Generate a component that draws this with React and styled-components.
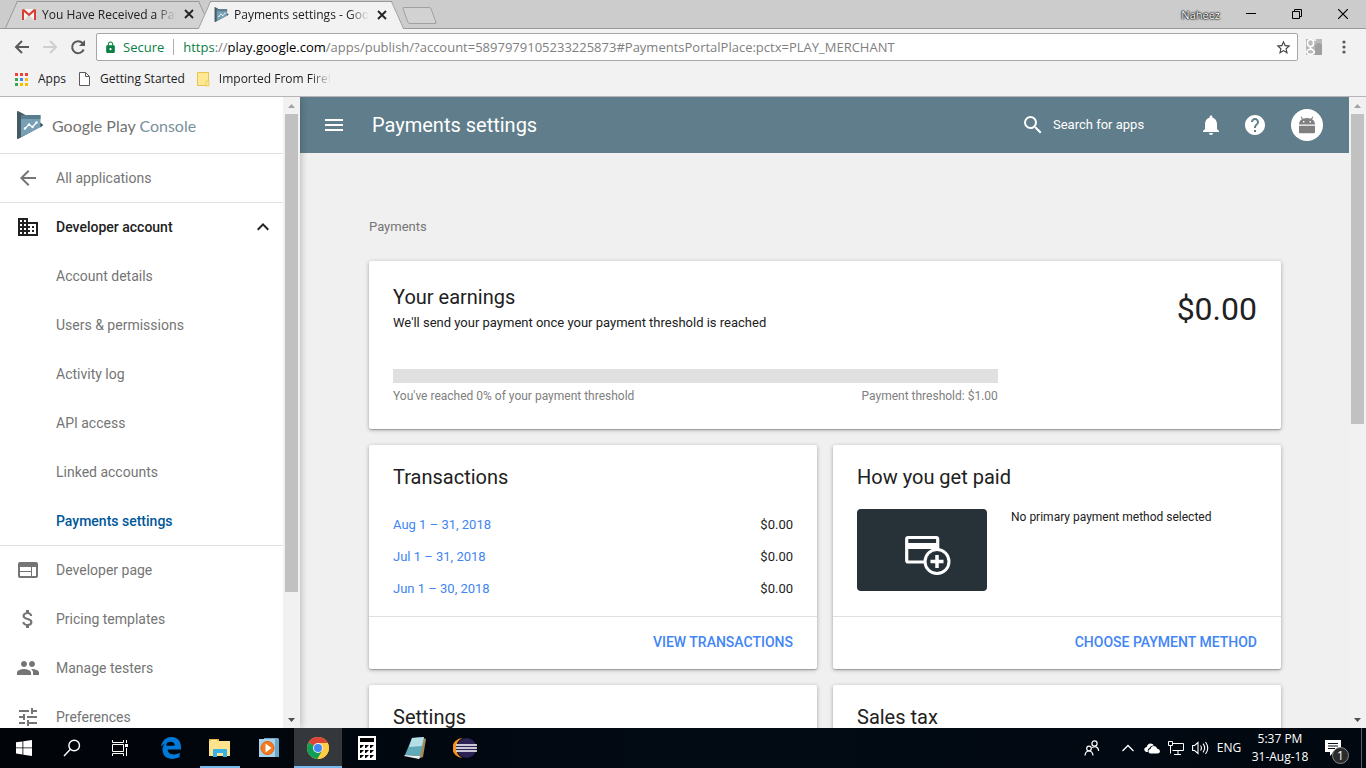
import React from 'react'
import styled, { createGlobalStyle } from 'styled-components'
import {
  MdArrowBack,
  MdAttachMoney,
  MdDomain,
  MdHelp,
  MdKeyboardArrowUp,
  MdLock,
  MdMenu,
  MdNotifications,
  MdPeople,
  MdSearch,
  MdStarBorder,
  MdTune,
  MdWeb,
} from 'react-icons/md'

const GlobalStyle = createGlobalStyle`
  * {
    box-sizing: border-box;
  }

  body {
    margin: 0;
    overflow: hidden;
    font-family: Roboto, 'Liberation Sans', sans-serif;
    color: #212121;
  }

  button {
    padding: 0;
    border: 0;
    background: none;
    font: inherit;
    color: inherit;
    cursor: pointer;
  }

  a {
    color: inherit;
    text-decoration: none;
  }

  h1, h2, p, ul {
    margin: 0;
    padding: 0;
    font-weight: 400;
  }

  ul {
    list-style: none;
  }

  svg {
    display: block;
    flex: none;
  }
`

const Screen = styled.div`
  display: flex;
  flex-direction: column;
  height: 100vh;
  overflow: hidden;
`

/* ---------- browser ---------- */

const Browser = styled.header`
  flex: none;
  background: #f2f2f2;
  border-bottom: 1px solid #b6b4b6;
  font-family: 'Open Sans', 'Noto Sans', sans-serif;
  font-size: 12px;
`

const TitleBar = styled.div`
  display: flex;
  height: 29px;
  padding-left: 5px;
  background: #cccccc;
  border-bottom: 1px solid #999999;
`

const Tab = styled.div`
  position: relative;
  z-index: ${(p) => (p.$active ? 2 : 1)};
  display: flex;
  align-items: center;
  width: 206px;
  height: ${(p) => (p.$active ? 29 : 28)}px;
  margin-right: -13px;
  padding: 0 17px 0 16px;

  &::before,
  &::after {
    content: '';
    position: absolute;
    z-index: -1;
    top: 1px;
    bottom: 0;
    width: 50%;
    background: ${(p) => (p.$active ? '#f2f2f2' : '#d2d2d2')};
    border-top: 1px solid #999999;
  }

  &::before {
    left: 6px;
    border-left: 1px solid #999999;
    transform: skewX(-24deg);
  }

  &::after {
    right: 6px;
    border-right: 1px solid #999999;
    transform: skewX(24deg);
  }
`

const FadingText = styled.span`
  flex: 1;
  min-width: 0;
  overflow: hidden;
  white-space: nowrap;
  mask-image: linear-gradient(to left, transparent, #000 20px);
`

const TabLabel = styled(FadingText)`
  margin: 0 8px 0 5px;
`

const TabClose = styled.button`
  width: 10px;
  height: 10px;
`

const NewTab = styled.button`
  align-self: center;
  width: 29px;
  height: 17px;
  margin: 2px 0 0 14px;
  background: #d2d2d2;
  border: 1px solid #a0a0a0;
  border-radius: 2px;
  transform: skewX(20deg);
`

const UserName = styled.span`
  margin-left: auto;
  margin-right: 8px;
  align-self: center;
  font-size: 11px;
  color: #ffffff;
  text-shadow: 0 0 1px #000, 0 0 2px #000, 0 0 2px #000;
`

const WindowButton = styled.button`
  display: grid;
  place-items: center;
  width: 46px;
  height: 27px;
`

const Toolbar = styled.div`
  display: flex;
  align-items: center;
  height: 36px;
  padding: 0 8px 0 14px;
`

const ToolButton = styled.button`
  display: grid;
  place-items: center;
  width: 28px;
  height: 28px;
  margin-left: ${(p) => p.$gap || 0}px;
  color: ${(p) => (p.$off ? '#cfcfcf' : '#5a5a5a')};
  flex: none;
`

const NavButton = styled(ToolButton)`
  width: 16px;
  margin-right: 12px;
`

const Omnibox = styled.div`
  display: flex;
  flex: 1;
  align-items: center;
  min-width: 0;
  height: 28px;
  margin-left: -2px;
  padding: 0 5px 0 7px;
  background: #ffffff;
  border: 1px solid #a6a6a6;
  border-radius: 2px;
  font-size: 13px;
  color: #808080;
  white-space: nowrap;
`

const Secure = styled.span`
  margin: 0 9px 0 6px;
  color: #0b8043;
`

const Address = styled.span`
  flex: 1;
  min-width: 0;
  overflow: hidden;
  padding-left: 9px;
  border-left: 1px solid #b0b0b0;
  line-height: 16px;

  b {
    font-weight: 400;
    color: #0b8043;
  }

  em {
    font-style: normal;
    color: #000000;
  }
`

const Bookmarks = styled.nav`
  display: flex;
  align-items: center;
  height: 31px;
  padding: 0 14px 4px;
`

const Bookmark = styled.a`
  display: flex;
  align-items: center;
  gap: 8px;
  margin-right: 10px;
  white-space: nowrap;

  ${FadingText} {
    flex: none;
    width: ${(p) => (p.$clip ? '112px' : 'auto')};
    ${(p) => (p.$clip ? '' : 'mask-image: none;')}
  }
`

/* ---------- page ---------- */

const Viewport = styled.div`
  display: flex;
  flex: 1;
  min-height: 0;
`

const Sidebar = styled.aside`
  z-index: 1;
  display: flex;
  flex: none;
  width: 300px;
  background: #ffffff;
  box-shadow: 0 0 8px rgba(0, 0, 0, 0.3);
  clip-path: inset(0 -8px 0 0);
`

const SideContent = styled.div`
  flex: 1;
  min-width: 0;
  overflow: hidden;
`

const Brand = styled.a`
  display: flex;
  align-items: center;
  gap: 8px;
  height: 57px;
  padding-left: 16px;
  border-bottom: 1px solid #e0e0e0;
  font-family: Lato, sans-serif;
  font-size: 16px;
  color: #737373;

  span {
    color: #78909c;
  }
`

const SideItem = styled.a`
  display: flex;
  align-items: center;
  gap: 16px;
  height: 49px;
  padding: 0 8px 0 16px;
  font-size: 14px;
  color: #757575;

  svg {
    width: 24px;
    height: 24px;
  }
`

const ItemText = styled.span`
  flex: 1;
`

const TopItem = styled(SideItem)`
  border-bottom: 1px solid #e0e0e0;
`

const GroupButton = styled(SideItem)`
  width: 100%;
  height: 48px;
  padding-bottom: 1px;
  text-align: left;
  font-weight: 500;
  color: #212121;
`

const SubItem = styled(SideItem)`
  padding-left: 56px;
  font-weight: ${(p) => (p.$current ? 500 : 400)};
  color: ${(p) => (p.$current ? '#01579b' : '#757575')};
`

const SubList = styled.ul`
  margin-bottom: -1px;
  border-bottom: 1px solid #e0e0e0;
`

const Track = styled.div`
  display: flex;
  flex: none;
  flex-direction: column;
  width: 17px;
  background: #f1f1f1;
`

const TrackButton = styled.button`
  display: grid;
  place-items: center;
  height: 17px;
  color: ${(p) => (p.$off ? '#a3a3a3' : '#505050')};
`

const Rail = styled.div`
  flex: 1;
`

const Thumb = styled.div`
  margin: 0 2px;
  background: #c1c1c1;
`

const Main = styled.main`
  flex: 1;
  min-width: 0;
  overflow: hidden;
  background: #f0f0f0;
`

const AppBar = styled.div`
  display: flex;
  align-items: center;
  height: 56px;
  padding: 0 26px 0 22px;
  background: #607d8b;
  color: #ffffff;
`

const BarTitle = styled.h1`
  flex: 1;
  margin-left: 26px;
  font-size: 20px;
  line-height: 24px;
`

const SearchBox = styled.label`
  display: flex;
  align-items: center;
  gap: 8px;
  width: 178px;

  input {
    flex: 1;
    min-width: 0;
    padding: 0 0 2px;
    border: 0;
    outline: 0;
    background: none;
    font: 13px Roboto, sans-serif;
    color: #ffffff;
  }

  input::placeholder {
    color: #ffffff;
    opacity: 1;
  }
`

const BarButton = styled.button`
  width: 24px;
  height: 24px;
  margin-right: 20px;
`

const Avatar = styled.button`
  display: grid;
  place-items: center;
  width: 32px;
  height: 32px;
  margin-left: 4px;
  background: #ffffff;
  border-radius: 50%;
`

const Content = styled.div`
  padding: 65px 68px 0 69px;
`

const Crumb = styled.p`
  margin-bottom: 26px;
  font-size: 13px;
  line-height: 17px;
  color: #757575;
`

const Cards = styled.div`
  display: grid;
  grid-template-columns: 1fr 1fr;
  gap: 16px;
`

const Card = styled.section`
  grid-column: ${(p) => (p.$wide ? '1 / -1' : 'auto')};
  display: flex;
  flex-direction: column;
  background: #ffffff;
  border-radius: 2px;
  box-shadow: 0 1px 4px rgba(0, 0, 0, 0.3), 0 1px 1px rgba(0, 0, 0, 0.2);
`

const CardBody = styled.div`
  flex: 1;
  padding: 20px 24px 11px;
`

const CardTitle = styled.h2`
  margin-bottom: ${(p) => (p.$tight ? 6 : 20)}px;
  font-size: 20px;
  line-height: 24px;
`

const Earnings = styled.div`
  display: grid;
  grid-template-columns: 7fr 3fr;
  padding: 24px 24px 25px;
`

const Amount = styled.div`
  text-align: right;
  font-size: 32px;
  line-height: 48px;
`

const Lead = styled.p`
  font-size: 13px;
  line-height: 16px;
`

const Progress = styled.div`
  height: 14px;
  margin: 38px 0 5px;
  background: #e0e0e0;
`

const ProgressFill = styled.div`
  height: 100%;
  background: #4285f4;
`

const ProgressNotes = styled.div`
  display: flex;
  justify-content: space-between;
  font-size: 12px;
  line-height: 16px;
  color: #808080;
`

const TransactionTable = styled.table`
  width: 100%;
  border-collapse: collapse;
  font-size: 13px;

  th,
  td {
    height: 32px;
    padding: 0 0 2px;
    font-weight: 400;
    text-align: left;
  }

  td {
    text-align: right;
  }

  a {
    color: #4285f4;
  }
`

const CardFooter = styled.div`
  display: flex;
  justify-content: flex-end;
  height: 53px;
  padding: 0 24px 2px;
  border-top: 1px solid #e0e0e0;

  button {
    font-size: 14px;
    font-weight: 500;
    text-transform: uppercase;
    color: #4285f4;
  }
`

const Method = styled.div`
  display: flex;
  gap: 24px;
  font-size: 12px;
  line-height: 16px;
`

const MethodArt = styled.div`
  display: grid;
  place-items: center;
  width: 130px;
  height: 82px;
  padding: 10px 0 0 12px;
  background: #263238;
  border-radius: 4px;
`

/* ---------- taskbar ---------- */

const Taskbar = styled.footer`
  display: flex;
  flex: none;
  height: 40px;
  background: linear-gradient(to right, #010409, #020a14 50%, #010810);
  color: #ffffff;
  font-family: 'Open Sans', 'Noto Sans', sans-serif;
  font-size: 12px;
`

const TaskGroup = styled.div`
  display: flex;
  gap: ${(p) => p.$gap || 0}px;
  margin-right: 3px;
`

const TaskButton = styled.button`
  display: grid;
  place-items: center;
  width: 48px;
  height: 40px;
  background: ${(p) => (p.$active ? '#34383c' : 'none')};
  ${(p) => p.$open && 'background: linear-gradient(#76b9ed, #76b9ed) 4px 38px / 40px 2px no-repeat;'}
  ${(p) => p.$active && 'box-shadow: inset 0 -2px #76b9ed;'}
`

const Tray = styled.div`
  display: flex;
  align-items: center;
  margin-left: auto;
`

const TrayButton = styled.button`
  display: grid;
  place-items: center;
  width: ${(p) => p.$width || 24}px;
  height: 40px;
  margin-right: ${(p) => p.$gap || 0}px;
  line-height: 18px;
`

const Notice = styled(TrayButton)`
  position: relative;
`

const Badge = styled.span`
  position: absolute;
  left: 18px;
  top: 19px;
  width: 17px;
  height: 17px;
  border: 1px solid #8a8a8a;
  border-radius: 50%;
  background: #2b2b2b;
  font-size: 12px;
  line-height: 15px;
`

const ShowDesktop = styled.button`
  width: 5px;
  height: 40px;
  border-left: 1px solid #5a5f66;
`

/* ---------- icons ---------- */

const GmailIcon = () => (
  <svg width="16" height="16" viewBox="0 0 16 16">
    <path d="M1 3h14v11H1z" fill="#f4f4f4" />
    <path d="M3 14 8 9l5 5z" fill="#d8d8d8" />
    <path d="M1 14V3.500L3 3l5 4.500L13 3l2 .5V14h-2V6L8 10.200 3 6v8z" fill="#d93f34" />
  </svg>
)

const ConsoleIcon = ({ size }) => (
  <svg width={size} height={size} viewBox="0 0 28 28">
    <path d="M1 1q0-1.500 1.500-.7L26 13q1.500 1 0 2L2.500 27.800Q1 28.500 1 27z" fill="#455a64" />
    <path d="M24 11.500 26 13q1.500 1 0 2l-2 1.500z" fill="#37474f" />
    <path d="M5 4h19.500v12L5 26z" fill="#78a0b4" />
    <path d="M5 4h19.500v4H5z" fill="#5a7d8e" />
    <path d="m9 17.500 4-4 3.500 2.500 4-4.500" fill="none" stroke="#fff" strokeWidth="1.300" />
    <g fill="#fff">
      <circle cx="9" cy="17.500" r="1.200" />
      <circle cx="13" cy="13.500" r="1.200" />
      <circle cx="16.500" cy="16" r="1.200" />
      <circle cx="20.500" cy="11.500" r="1.200" />
    </g>
  </svg>
)

const CloseIcon = () => (
  <svg width="10" height="10" viewBox="0 0 10 10" stroke="#222" strokeWidth="1.800">
    <path d="m1 1 8 8M9 1 1 9" />
  </svg>
)

const Arrow = ({ flip }) => (
  <svg width="16" height="16" viewBox="0 0 16 16" fill="none" stroke="currentColor" strokeWidth="2">
    <path d={flip ? 'M1 8h13M8 2l6 6-6 6' : 'M15 8H2M8 2 2 8l6 6'} />
  </svg>
)

const ReloadIcon = () => (
  <svg width="16" height="16" viewBox="0 0 16 16" fill="none" stroke="currentColor" strokeWidth="2">
    <path d="M13.700 10.500A6 6 0 1 1 12.500 4L14 5.500" />
    <path d="M15 1v6H9z" fill="currentColor" stroke="none" />
  </svg>
)

const ExtensionIcon = () => (
  <svg width="16" height="16" viewBox="0 0 16 16">
    <path d="M0 0h16v16H0z" fill="#b9b9b9" />
    <path d="M9 6q4-4 7 0v10H9z" fill="#a0a0a0" />
    <g fill="none" stroke="#fff" strokeWidth="1.600">
      <ellipse cx="4.500" cy="4" rx="3" ry="3.500" />
      <path d="M7 1h3M5 7.500q-2 1.500 1 3 3 1.500 2 3.500-2 2-6 1-2-2 0-4l3-1" />
    </g>
  </svg>
)

const DotsIcon = () => (
  <svg width="4" height="16" viewBox="0 0 4 16" fill="#5a5a5a">
    <circle cx="2" cy="3" r="1.600" />
    <circle cx="2" cy="8" r="1.600" />
    <circle cx="2" cy="13" r="1.600" />
  </svg>
)

const appColors = ['#ea4335', '#ea4335', '#ea4335', '#34a853', '#4285f4', '#fbbc05', '#34a853', '#fbbc05', '#fbbc05']

const AppsIcon = () => (
  <svg width="16" height="16" viewBox="0 0 16 16">
    {appColors.map((fill, i) => (
      <rect key={i} x={1 + (i % 3) * 5} y={2 + Math.floor(i / 3) * 5} width="3" height="3" fill={fill} />
    ))}
  </svg>
)

const PageIcon = () => (
  <svg width="16" height="16" viewBox="0 0 16 16" fill="#fff" stroke="#5a5a5a">
    <path d="M3.500 1.500h6l4 4v9h-10z" />
    <path d="M9.500 1.500v4h4" fill="none" />
  </svg>
)

const FolderIcon = () => (
  <svg width="16" height="16" viewBox="0 0 16 16">
    <path d="M2.500 1.500h11v13h-11z" fill="#ffe793" stroke="#eac34f" />
    <path d="M11 10h3v5h-3z" fill="#ffe793" stroke="#eac34f" strokeWidth=".7" />
  </svg>
)

const Triangle = ({ down }) => (
  <svg width="7" height="4" viewBox="0 0 7 4" fill="currentColor">
    <path d={down ? 'M0 0h7L3.500 4z' : 'M0 4h7L3.500 0z'} />
  </svg>
)

const AndroidIcon = () => (
  <svg width="16" height="18" viewBox="0 0 16 18" fill="#808080">
    <path
      fillRule="evenodd"
      d="M0 8.500q.2-3.800 3-5.200L1.600.9l.8-.5 1.700 2.300q3.900-1.400 7.800 0L13.600.4l.8.5L13 3.300q2.800 1.400 3 5.200zM4 5v1.400h1.400V5zm6.600 0v1.400H12V5z"
    />
    <path d="M0 9.700h16v6.500q0 1-1 1H1q-1 0-1-1z" />
  </svg>
)

const CardPlusIcon = () => (
  <svg width="46" height="40" viewBox="0 0 46 40" fill="none" stroke="#fff">
    <rect x="1.700" y="2.500" width="31" height="24.500" rx="1.500" strokeWidth="3.200" />
    <path d="M2 11h31" strokeWidth="6" />
    <circle cx="32" cy="26.500" r="12" fill="#263238" strokeWidth="3" />
    <path d="M32 20v13M25.500 26.500h13" strokeWidth="3.500" />
  </svg>
)

const StartIcon = () => (
  <svg width="16" height="16" viewBox="0 0 16 16" fill="#fff">
    <path d="M0 2.300 6.500 1.400v6.100H0zM7.300 1.300 16 0v7.500H7.300zM0 8.300h6.500v6.200L0 13.600zM7.300 8.300H16V16l-8.700-1.300z" />
  </svg>
)

const TaskSearchIcon = () => (
  <svg width="18" height="18" viewBox="0 0 18 18" fill="none" stroke="#fff" strokeWidth="1.400">
    <circle cx="11.200" cy="6.500" r="5.300" />
    <path d="M7.400 10.300 1 17" />
  </svg>
)

const TaskViewIcon = () => (
  <svg width="17" height="16" viewBox="0 0 17 16" fill="none" stroke="#fff">
    <path d="M.5 0v2.500h11V0M.5 16v-2.500h11V16M.5 4.500h11v7H.5zM14.500 0v3M14.500 8v8" />
    <path d="M13 4h3v3h-3z" fill="#fff" stroke="none" />
  </svg>
)

const EdgeIcon = () => (
  <svg width="20" height="22" viewBox="0 0 20 22">
    <path
      fill="#0078d7"
      d="M0 9.700C.8 4.300 4.600 0 10.300 0 17 0 20 4.800 20 10v2.600H6.700c.2 5.600 7.300 6 12 3.200v4.300c-7 3.700-17.200 2-17.200-7.300 0-4 2.300-6.900 5.500-8.400-1 1.300-1.500 2.600-1.700 4.300h8.400c.3-6-8.200-4.700-13.700 1z"
    />
  </svg>
)

const ExplorerIcon = () => (
  <svg width="22" height="18" viewBox="0 0 22 18">
    <path d="M0 0h10v3H0z" fill="#e8b83a" />
    <path d="M2 1h6v1H2z" fill="#fff3b0" />
    <path d="M0 2h21v15H0z" fill="#fce38c" />
    <path d="M4 18v-7q0-1 1-1h12q1 0 1 1v7h-4v-4H8v4z" fill="#37b1e8" />
  </svg>
)

const MediaIcon = () => (
  <svg width="20" height="20" viewBox="0 0 20 20">
    <path d="M5 0h14l1 1v18H5z" fill="#6ba7c9" />
    <path d="M0 1h16v18H0z" fill="#a8d3ea" />
    <circle cx="8.500" cy="10" r="6.500" fill="#f47b20" stroke="#e5600a" />
    <path d="M6.500 5.500v9l6-4.500z" fill="#fff" />
  </svg>
)

const ChromeIcon = () => (
  <svg width="22" height="22" viewBox="0 0 22 22">
    <circle cx="11" cy="11" r="11" fill="#ffcd40" />
    <path d="M11 11 1.500 5.500a11 11 0 0 1 19 0z" fill="#db4437" />
    <path d="M1.500 5.500a11 11 0 0 0 9 16.500l5-8.500L11 11z" fill="#0f9d58" />
    <path d="M11 6h9.800a11 11 0 0 1-10.300 16l4.800-8.500z" fill="#ffcd40" />
    <circle cx="11" cy="11" r="5" fill="#f1f1f1" />
    <circle cx="11" cy="11" r="4" fill="#4285f4" />
  </svg>
)

const CalculatorIcon = () => (
  <svg width="18" height="24" viewBox="0 0 18 24">
    <path d="M0 0h18v24H0z" fill="#fff" />
    <path d="M2 2h14v4H2zM2 9h4L3 12H2zM7 9h4l-3 3H7zM12 9h4l-3 3h-1zM2 14h4l-3 3H2zM7 14h4l-3 3H7zM12 14h4l-3 3h-1zM2 19h4l-3 3H2zM7 19h4l-3 3H7zM12 19h4l-3 3h-1z" />
  </svg>
)

const NotepadIcon = () => (
  <svg width="24" height="22" viewBox="0 0 24 22">
    <path d="m19 1 3 1-3 18-5 2z" fill="#a58a5b" />
    <path d="M8 1 20 0l-4 19-15-1z" fill="#5fa9b8" />
    <path d="M8 1 20 0l-2 9-13 1z" fill="#b5dfe5" />
    <path d="m1 18 15 1-1 3L0 19z" fill="#e8f3f4" />
  </svg>
)

const EclipseIcon = () => (
  <svg width="24" height="20" viewBox="0 0 24 20">
    <path d="M9.500 0A10 10 0 0 0 9.500 20 11 11 0 0 1 9.500 0z" fill="#f7941e" />
    <circle cx="13.500" cy="10" r="10" fill="#2c2255" />
    <path d="M3 7h21M3 10h21M3 13h21" stroke="#fff" strokeWidth="1.500" />
  </svg>
)

const ContactsIcon = () => (
  <svg width="16" height="16" viewBox="0 0 16 16" fill="none" stroke="#fff" strokeWidth="1.200">
    <circle cx="10.500" cy="3.500" r="2.600" />
    <circle cx="5" cy="8.500" r="2.300" />
    <path d="M1 15.500q.5-4.500 4-4.500t4 4.500M8 7.500q6-2.500 6.700 3.500" />
  </svg>
)

const ChevronIcon = () => (
  <svg width="12" height="8" viewBox="0 0 12 8" fill="none" stroke="#fff" strokeWidth="1.300">
    <path d="m.5 7 5.500-5.500L11.500 7" />
  </svg>
)

const CloudIcon = () => (
  <svg width="16" height="11" viewBox="0 0 16 11" fill="#fff">
    <path d="M4 9H2Q-.5 7.500.5 5.500 1 4 2.800 4 3.500.5 6.500.5q2.500 0 3.500 2-3.500-.5-4.500 2.500Q3 6 4 9z" />
    <path d="M6.500 10.500Q4 10 4.500 7.500 5 6 6.500 6q.5-3 3.500-3 2.500 0 3.300 2.700 2.500 0 2.700 2.500-.2 2.300-2.500 2.300z" />
  </svg>
)

const NetworkIcon = () => (
  <svg width="16" height="14" viewBox="0 0 16 14" fill="none" stroke="#fff">
    <path d="M5 2.500h10.500v7H4.500M10 9.500V13M6 13.500h7M.5.500h4v4h-4zM2.500 4.500v8" />
  </svg>
)

const VolumeIcon = () => (
  <svg width="17" height="14" viewBox="0 0 17 14" fill="none" stroke="#fff" strokeWidth="1.100">
    <path d="M.6 4.500h2L6 1.500v11l-3.400-3h-2zM8.500 4.500q2 2.500 0 5M11 2.700q3.300 4.300 0 8.600M13.500 1q4.500 6 0 12" />
  </svg>
)

const NoticeIcon = () => (
  <svg width="16" height="16" viewBox="0 0 16 16">
    <path d="M0 0h16v12H8.500L5 16v-4H0z" fill="#fff" />
    <path d="M3 3.500h10M3 6h10M3 8.500h7" stroke="#06101a" />
  </svg>
)

/* ---------- data ---------- */

const accountLinks = [
  'Account details',
  'Users & permissions',
  'Activity log',
  'API access',
  'Linked accounts',
  'Payments settings',
]

const toolLinks = [
  { label: 'Developer page', icon: MdWeb },
  { label: 'Pricing templates', icon: MdAttachMoney },
  { label: 'Manage testers', icon: MdPeople },
  { label: 'Preferences', icon: MdTune },
]

const transactions = [
  { period: 'Aug 1 – 31, 2018', total: '$0.00' },
  { period: 'Jul 1 – 31, 2018', total: '$0.00' },
  { period: 'Jun 1 – 30, 2018', total: '$0.00' },
]

const pinnedApps = [
  { name: 'Edge', icon: EdgeIcon },
  { name: 'File Explorer', icon: ExplorerIcon, open: true },
  { name: 'Media Player', icon: MediaIcon },
  { name: 'Chrome', icon: ChromeIcon, active: true },
  { name: 'Calculator', icon: CalculatorIcon },
  { name: 'Notepad', icon: NotepadIcon },
  { name: 'Eclipse', icon: EclipseIcon },
]

const Scrollbar = ({ size }) => (
  <Track>
    <TrackButton $off aria-label="Scroll up">
      <Triangle />
    </TrackButton>
    <Rail>
      <Thumb style={{ height: `${size}%` }} />
    </Rail>
    <TrackButton aria-label="Scroll down">
      <Triangle down />
    </TrackButton>
  </Track>
)

const BrowserChrome = () => (
  <Browser>
    <TitleBar>
      <Tab>
        <GmailIcon />
        <TabLabel>You Have Received a Payment</TabLabel>
        <TabClose aria-label="Close tab">
          <CloseIcon />
        </TabClose>
      </Tab>
      <Tab $active>
        <ConsoleIcon size={15} />
        <TabLabel>Payments settings - Google</TabLabel>
        <TabClose aria-label="Close tab">
          <CloseIcon />
        </TabClose>
      </Tab>
      <NewTab aria-label="New tab" />
      <UserName>Naheez</UserName>
      <WindowButton aria-label="Minimize">
        <svg width="10" height="10" viewBox="0 0 10 10" stroke="#000">
          <path d="M0 4.500h10" />
        </svg>
      </WindowButton>
      <WindowButton aria-label="Restore">
        <svg width="10" height="10" viewBox="0 0 10 10" fill="none" stroke="#000">
          <path d="M.5 2.500h7v7h-7zM2.500 2.500v-2h7v7h-2" />
        </svg>
      </WindowButton>
      <WindowButton aria-label="Close">
        <svg width="10" height="10" viewBox="0 0 10 10" stroke="#000" strokeWidth="1.200">
          <path d="m0 0 10 10M10 0 0 10" />
        </svg>
      </WindowButton>
    </TitleBar>
    <Toolbar>
      <NavButton aria-label="Back">
        <Arrow />
      </NavButton>
      <NavButton $off aria-label="Forward">
        <Arrow flip />
      </NavButton>
      <NavButton aria-label="Reload">
        <ReloadIcon />
      </NavButton>
      <Omnibox>
        <MdLock size={13} color="#0b8043" />
        <Secure>Secure</Secure>
        <Address>
          <b>https</b>://<em>play.google.com</em>
          /apps/publish/?account=5897979105233225873#PaymentsPortalPlace:pctx=PLAY_MERCHANT
        </Address>
        <MdStarBorder size={17} color="#444" />
      </Omnibox>
      <ToolButton $gap={2} aria-label="Extension">
        <ExtensionIcon />
      </ToolButton>
      <ToolButton $gap={2} aria-label="Menu">
        <DotsIcon />
      </ToolButton>
    </Toolbar>
    <Bookmarks aria-label="Bookmarks">
      <Bookmark href="#apps">
        <AppsIcon />
        <FadingText>Apps</FadingText>
      </Bookmark>
      <Bookmark href="#start">
        <PageIcon />
        <FadingText>Getting Started</FadingText>
      </Bookmark>
      <Bookmark href="#imported" $clip>
        <FolderIcon />
        <FadingText>Imported From Firefox</FadingText>
      </Bookmark>
    </Bookmarks>
  </Browser>
)

const SideNav = () => (
  <Sidebar>
    <SideContent>
      <Brand href="#home">
        <ConsoleIcon size={28} />
        <div>
          Google Play <span>Console</span>
        </div>
      </Brand>
      <TopItem href="#applications">
        <MdArrowBack />
        <ItemText>All applications</ItemText>
      </TopItem>
      <GroupButton as="button" aria-expanded="true">
        <MdDomain />
        <ItemText>Developer account</ItemText>
        <MdKeyboardArrowUp />
      </GroupButton>
      <SubList>
        {accountLinks.map((label) => (
          <li key={label}>
            <SubItem href="#account" $current={label === 'Payments settings'}>
              {label}
            </SubItem>
          </li>
        ))}
      </SubList>
      <ul>
        {toolLinks.map(({ label, icon: Icon }) => (
          <li key={label}>
            <SideItem href="#tools">
              <Icon />
              <ItemText>{label}</ItemText>
            </SideItem>
          </li>
        ))}
      </ul>
    </SideContent>
    <Scrollbar size={80} />
  </Sidebar>
)

const PaymentsPage = () => (
  <Main>
    <AppBar>
      <button aria-label="Menu">
        <MdMenu size={24} />
      </button>
      <BarTitle>Payments settings</BarTitle>
      <SearchBox>
        <MdSearch size={24} />
        <input type="text" aria-label="Search for apps" placeholder="Search for apps" />
      </SearchBox>
      <BarButton aria-label="Notifications">
        <MdNotifications size={24} />
      </BarButton>
      <BarButton aria-label="Help">
        <MdHelp size={24} />
      </BarButton>
      <Avatar aria-label="Account">
        <AndroidIcon />
      </Avatar>
    </AppBar>
    <Content>
      <Crumb>Payments</Crumb>
      <Cards>
        <Card $wide>
          <Earnings>
            <div>
              <CardTitle $tight>Your earnings</CardTitle>
              <Lead>We'll send your payment once your payment threshold is reached</Lead>
              <Progress role="progressbar" aria-label="Payment threshold" aria-valuenow={0}>
                <ProgressFill style={{ width: '0%' }} />
              </Progress>
              <ProgressNotes>
                <span>You've reached 0% of your payment threshold</span>
                <span>Payment threshold: $1.00</span>
              </ProgressNotes>
            </div>
            <Amount>$0.00</Amount>
          </Earnings>
        </Card>
        <Card>
          <CardBody>
            <CardTitle>Transactions</CardTitle>
            <TransactionTable>
              <tbody>
                {transactions.map(({ period, total }) => (
                  <tr key={period}>
                    <th scope="row">
                      <a href="#transactions">{period}</a>
                    </th>
                    <td>{total}</td>
                  </tr>
                ))}
              </tbody>
            </TransactionTable>
          </CardBody>
          <CardFooter>
            <button>View transactions</button>
          </CardFooter>
        </Card>
        <Card>
          <CardBody>
            <CardTitle>How you get paid</CardTitle>
            <Method>
              <MethodArt>
                <CardPlusIcon />
              </MethodArt>
              <p>No primary payment method selected</p>
            </Method>
          </CardBody>
          <CardFooter>
            <button>Choose payment method</button>
          </CardFooter>
        </Card>
        <Card>
          <CardBody>
            <CardTitle>Settings</CardTitle>
          </CardBody>
        </Card>
        <Card>
          <CardBody>
            <CardTitle>Sales tax</CardTitle>
          </CardBody>
        </Card>
      </Cards>
    </Content>
  </Main>
)

const WindowsTaskbar = () => (
  <Taskbar>
    <TaskGroup>
      <TaskButton aria-label="Start">
        <StartIcon />
      </TaskButton>
      <TaskButton aria-label="Search">
        <TaskSearchIcon />
      </TaskButton>
      <TaskButton aria-label="Task view">
        <TaskViewIcon />
      </TaskButton>
    </TaskGroup>
    <TaskGroup $gap={1}>
      {pinnedApps.map(({ name, icon: Icon, open, active }) => (
        <TaskButton key={name} aria-label={name} $open={open} $active={active}>
          <Icon />
        </TaskButton>
      ))}
    </TaskGroup>
    <Tray>
      <TrayButton $gap={12} aria-label="People">
        <ContactsIcon />
      </TrayButton>
      <TrayButton aria-label="Show hidden icons">
        <ChevronIcon />
      </TrayButton>
      <TrayButton aria-label="OneDrive">
        <CloudIcon />
      </TrayButton>
      <TrayButton aria-label="Network">
        <NetworkIcon />
      </TrayButton>
      <TrayButton aria-label="Volume">
        <VolumeIcon />
      </TrayButton>
      <TrayButton $width={34}>ENG</TrayButton>
      <TrayButton $width={68}>
        <span>
          5:37 PM
          <br />
          31-Aug-18
        </span>
      </TrayButton>
      <Notice $width={38} $gap={9} aria-label="Notifications">
        <NoticeIcon />
        <Badge>1</Badge>
      </Notice>
      <ShowDesktop aria-label="Show desktop" />
    </Tray>
  </Taskbar>
)

const App = () => (
  <Screen>
    <GlobalStyle />
    <BrowserChrome />
    <Viewport>
      <SideNav />
      <PaymentsPage />
      <Scrollbar size={52} />
    </Viewport>
    <WindowsTaskbar />
  </Screen>
)

export default App
